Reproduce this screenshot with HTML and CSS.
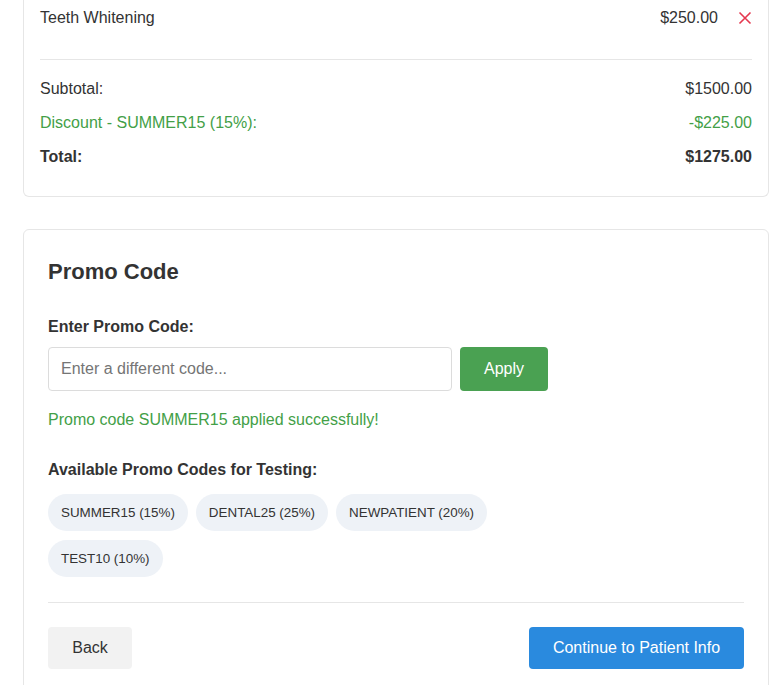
FILE: index.html
```html
<!DOCTYPE html>
<html>
<head>
<meta charset="utf-8">
<link rel="stylesheet" href="styles.css">
</head>
<body>
<div class="page">
  <section class="card summary">
    <div class="item-row">
      <span>Teeth Whitening</span>
      <span class="item-right"><span>$250.00</span><button class="remove" aria-label="Remove">
        <svg width="14" height="14" viewBox="0 0 14 14"><path d="M1.5 1.5 L12.5 12.5 M12.5 1.5 L1.5 12.5" stroke="#e5384f" stroke-width="1.6" fill="none"/></svg>
      </button></span>
    </div>
    <div class="totals">
      <div class="total-row"><span>Subtotal:</span><span>$1500.00</span></div>
      <div class="total-row discount"><span>Discount - SUMMER15 (15%):</span><span>-$225.00</span></div>
      <div class="total-row grand"><span>Total:</span><span>$1275.00</span></div>
    </div>
  </section>

  <section class="card promo">
    <h2>Promo Code</h2>
    <label class="label" for="code">Enter Promo Code:</label>
    <div class="input-row">
      <input id="code" class="code-input" type="text" placeholder="Enter a different code...">
      <button class="apply">Apply</button>
    </div>
    <p class="success">Promo code SUMMER15 applied successfully!</p>
    <div class="label avail">Available Promo Codes for Testing:</div>
    <div class="chips">
      <span class="chip">SUMMER15 (15%)</span>
      <span class="chip">DENTAL25 (25%)</span>
      <span class="chip">NEWPATIENT (20%)</span>
      <span class="chip">TEST10 (10%)</span>
    </div>
    <div class="actions">
      <button class="back">Back</button>
      <button class="continue">Continue to Patient Info</button>
    </div>
  </section>
</div>
</body>
</html>
```
FILE: styles.css
```css
* { box-sizing: border-box; }
body {
  margin: 0;
  background: #fff;
  font-family: "Liberation Sans", Arial, Helvetica, sans-serif;
  color: #333;
  font-size: 16px;
}
.page {
  width: 746px;
  margin-left: 23px;
}
.card {
  background: #fff;
  border: 1px solid #e6e6e6;
  border-radius: 6px;
}
.summary {
  border-top: none;
  border-top-left-radius: 0;
  border-top-right-radius: 0;
  padding: 1px 16px 22px;
}
.item-row, .total-row {
  display: flex;
  justify-content: space-between;
  align-items: center;
  line-height: 18px;
  padding: 8px 0;
}
.item-right {
  display: flex;
  align-items: center;
  gap: 20px;
}
.remove {
  border: none;
  background: none;
  padding: 0;
  display: flex;
  align-items: center;
  cursor: pointer;
}
.totals {
  margin-top: 24px;
  border-top: 1px solid #e6e6e6;
  padding-top: 12px;
}
.discount { color: #43a047; }
.grand { font-weight: bold; }

.promo {
  margin-top: 32px;
  padding: 24px 24px 60px;
  border-bottom-left-radius: 0;
  border-bottom-right-radius: 0;
}
h2 {
  margin: 4px 0 0;
  font-size: 22px;
  line-height: 28px;
  font-weight: bold;
}
.label {
  display: block;
  margin-top: 32px;
  font-size: 16px;
  font-weight: bold;
  line-height: 18px;
}
.input-row {
  display: flex;
  gap: 8px;
  margin-top: 11px;
}
.code-input {
  width: 404px;
  height: 44px;
  border: 1px solid #dcdcdc;
  border-radius: 4px;
  padding: 0 12px;
  font-family: inherit;
  font-size: 16px;
  color: #333;
}
.code-input::placeholder { color: #757575; }
.apply {
  width: 88px;
  height: 44px;
  border: none;
  border-radius: 4px;
  background: #4aa152;
  color: #fff;
  font-family: inherit;
  font-size: 16px;
}
.success {
  margin: 20px 0 0;
  color: #43a047;
  font-size: 16px;
  line-height: 18px;
}
.avail { margin-top: 32px; }
.chips {
  display: flex;
  flex-wrap: wrap;
  gap: 9px 8px;
  margin-top: 15px;
  width: 460px;
}
.chip {
  background: #eef2f7;
  border-radius: 19px;
  padding: 0 13px;
  height: 37px;
  line-height: 37px;
  font-size: 13.4px;
  color: #333;
}
.actions {
  display: flex;
  justify-content: space-between;
  margin-top: 25px;
  padding-top: 24px;
  border-top: 1px solid #e6e6e6;
}
.back, .continue {
  height: 42px;
  border: none;
  border-radius: 4px;
  font-family: inherit;
  font-size: 16px;
  padding: 0;
}
.back {
  background: #f2f2f2;
  color: #333;
  width: 84px;
}
.continue {
  background: #2a8ade;
  color: #fff;
  width: 215px;
}
```
